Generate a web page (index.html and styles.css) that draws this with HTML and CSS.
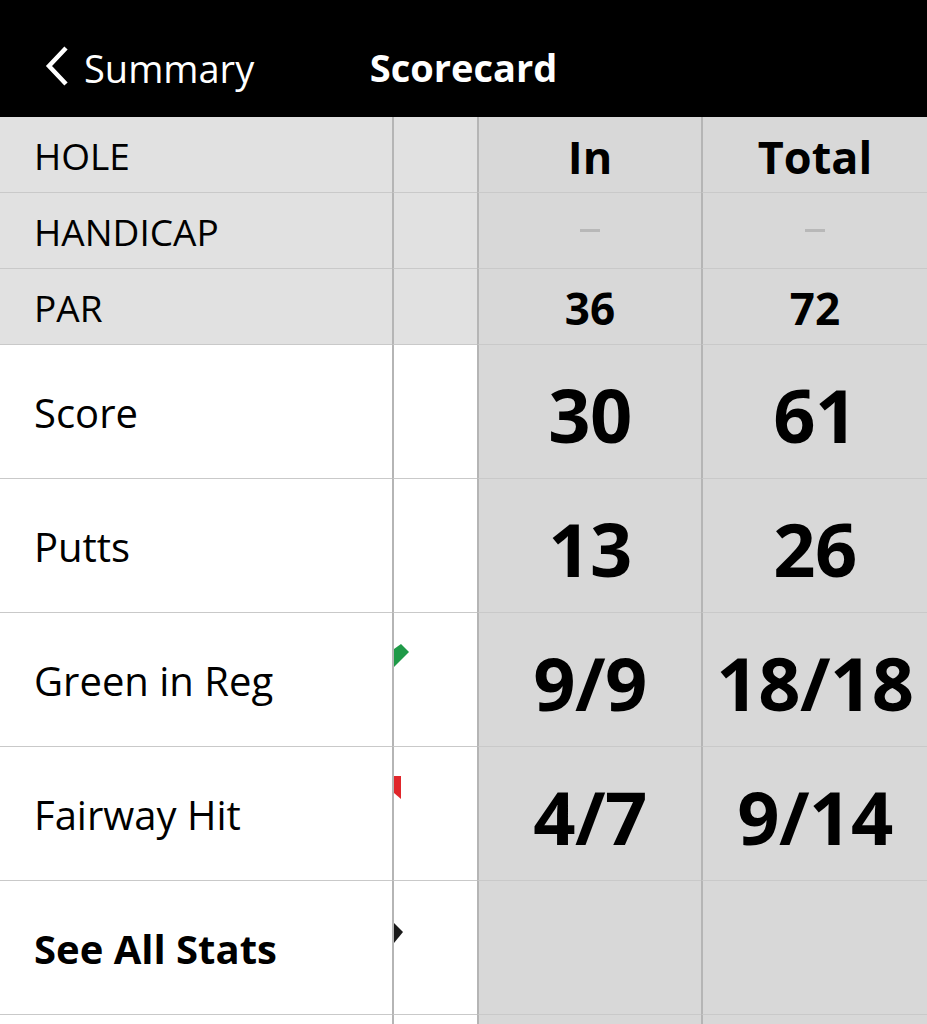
FILE: index.html
```html
<!DOCTYPE html>
<html lang="en">
<head>
<meta charset="utf-8">
<title>Scorecard</title>
<link rel="stylesheet" href="styles.css">
</head>
<body>
<header class="topbar">
  <a class="back" href="#">
    <svg class="chev" width="26" height="42" viewBox="0 0 26 42"><polyline points="21,3 4,21 21,39" fill="none" stroke="#fff" stroke-width="4.5" stroke-linecap="butt" stroke-linejoin="miter"/></svg>
    <span>Summary</span>
  </a>
  <h1 class="title">Scorecard</h1>
  <span class="spacer"></span>
</header>
<main class="card">
  <div class="row head">
    <div class="cell label">HOLE</div>
    <div class="cell holes"></div>
    <div class="cell sum colhead">In</div>
    <div class="cell sum colhead">Total</div>
  </div>
  <div class="row head">
    <div class="cell label">HANDICAP</div>
    <div class="cell holes"></div>
    <div class="cell sum"><span class="dash"></span></div>
    <div class="cell sum"><span class="dash"></span></div>
  </div>
  <div class="row head">
    <div class="cell label">PAR</div>
    <div class="cell holes"></div>
    <div class="cell sum par">36</div>
    <div class="cell sum par">72</div>
  </div>
  <div class="row data">
    <div class="cell label">Score</div>
    <div class="cell holes"></div>
    <div class="cell sum big">30</div>
    <div class="cell sum big">61</div>
  </div>
  <div class="row data">
    <div class="cell label">Putts</div>
    <div class="cell holes"></div>
    <div class="cell sum big">13</div>
    <div class="cell sum big">26</div>
  </div>
  <div class="row data">
    <div class="cell label">Green in Reg</div>
    <div class="cell holes"><svg class="mark" width="16" height="60" viewBox="0 0 16 60"><polygon points="0,36 7,31 15,39 0,54" fill="#1f9a48"/></svg></div>
    <div class="cell sum big">9/9</div>
    <div class="cell sum big">18/18</div>
  </div>
  <div class="row data">
    <div class="cell label">Fairway Hit</div>
    <div class="cell holes"><svg class="mark" width="16" height="60" viewBox="0 0 16 60"><polygon points="0,29 7,29 7,52 0,46" fill="#e0262b"/></svg></div>
    <div class="cell sum big">4/7</div>
    <div class="cell sum big">9/14</div>
  </div>
  <div class="row data">
    <div class="cell label strong">See All Stats</div>
    <div class="cell holes"><svg class="mark" width="16" height="70" viewBox="0 0 16 70"><polygon points="0,42 9,51 0,62" fill="#1a1a1a"/></svg></div>
    <div class="cell sum"></div>
    <div class="cell sum"></div>
  </div>
  <div class="row data">
    <div class="cell label"></div>
    <div class="cell holes"></div>
    <div class="cell sum"></div>
    <div class="cell sum"></div>
  </div>
</main>
</body>
</html>
```
FILE: styles.css
```css
html, body {
  margin: 0;
  padding: 0;
  background: #fff;
}
body {
  width: 927px;
  height: 1024px;
  overflow: hidden;
  font-family: "Open Sans", "Noto Sans", sans-serif;
  color: #000;
}
.topbar {
  height: 117px;
  background: #000;
  display: grid;
  grid-template-columns: 1fr auto 1fr;
  align-items: center;
  color: #fff;
}
.back {
  display: flex;
  align-items: center;
  color: #fff;
  text-decoration: none;
  font-size: 38px;
  padding-left: 45px;
  padding-top: 18px;
}
.chev {
  display: block;
  margin-right: 13px;
  margin-top: -4px;
}
.title {
  margin: 0;
  font-size: 38px;
  font-weight: 700;
  padding-top: 16px;
}
.card {
  display: block;
}
.row {
  display: grid;
  grid-template-columns: 392px 85px 224px 1fr;
}
.row.head { height: 76px; }
.row.data { height: 134px; }
.cell {
  box-sizing: border-box;
  border-bottom: 1px solid #c9c9c9;
  display: flex;
  align-items: center;
}
.row.head .cell { background: #e1e1e1; }
.row.data .cell { background: #fff; }
.row .cell.sum { background: #d8d8d8; }
.holes, .sum {
  border-left: 2px solid #b5b5b5;
}
.holes {
  align-items: flex-start;
  overflow: hidden;
}
.mark { display: block; }
.sum {
  justify-content: center;
  font-weight: 700;
}
.label {
  padding-left: 34px;
}
.row.head .label {
  font-size: 37px;
  padding-top: 2px;
}
.row.data .label {
  font-size: 40px;
  padding-top: 2px;
}
.row.data .label.strong {
  font-weight: 700;
  font-size: 40px;
}
.colhead {
  font-size: 45px;
  padding-top: 3px;
}
.par {
  font-size: 44px;
  padding-top: 3px;
}
.big {
  font-size: 74px;
  padding-top: 6px;
  letter-spacing: -0.5px;
}
.dash {
  display: block;
  width: 20px;
  height: 3px;
  background: #b8b8b8;
}
```
